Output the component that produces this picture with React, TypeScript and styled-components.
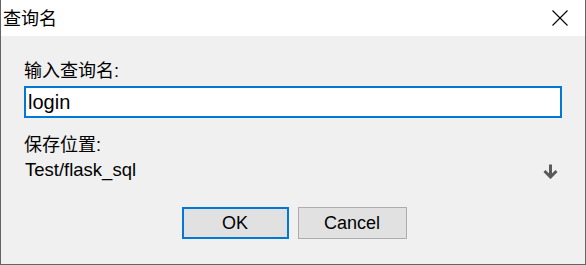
import React from "react";
import styled, { createGlobalStyle } from "styled-components";

const Global = createGlobalStyle`
  html, body { margin: 0; padding: 0; background: #f0f0f0; }
  * { box-sizing: border-box; }
`;

const Window = styled.div`
  width: 586px;
  height: 265px;
  background: #f0f0f0;
  border: 1px solid #646464;
  border-top: none;
  display: flex;
  flex-direction: column;
  font-family: "Liberation Sans", "Noto Sans CJK SC", sans-serif;
  color: #000;
`;

const TitleBar = styled.div`
  height: 36px;
  background: #fff;
  display: flex;
  align-items: center;
  justify-content: space-between;
  padding: 0 17px 0 2px;
`;

const Title = styled.span`
  font-family: "Noto Sans CJK SC", sans-serif;
  font-size: 18px;
  line-height: 36px;
  margin-top: -2px;
`;

const CloseIcon = styled.svg`
  width: 16px;
  height: 16px;
  display: block;
  margin-top: -1px;
`;

const Body = styled.div`
  display: flex;
  flex-direction: column;
  padding: 24px 23px 0 23px;
`;

const Label = styled.div<{ $top?: number }>`
  height: 22px;
  line-height: 22px;
  font-size: 18px;
  margin-top: ${(p) => p.$top ?? 0}px;
  white-space: nowrap;
`;

const Input = styled.input`
  margin-top: 4px;
  height: 32px;
  width: 100%;
  border: 2px solid #0078d7;
  background: #fff;
  padding: 0 0 0 2px;
  font-family: "Liberation Sans", sans-serif;
  font-size: 20px;
  color: #000;
  outline: none;
`;

const PathRow = styled.div`
  margin-top: 3px;
  height: 22px;
  line-height: 22px;
  font-size: 18.5px;
  display: flex;
  align-items: center;
  justify-content: space-between;
  padding-right: 4px;
  padding-left: 1px;
`;

const ArrowIcon = styled.svg`
  width: 15px;
  height: 15px;
  display: block;
  margin-top: 2px;
`;

const Buttons = styled.div`
  margin-top: 26px;
  display: flex;
  justify-content: center;
  gap: 9px;
  padding-left: 2px;
`;

const Button = styled.button<{ $default?: boolean }>`
  width: ${(p) => (p.$default ? 107 : 109)}px;
  height: 32px;
  background: #e1e1e1;
  border: ${(p) => (p.$default ? "2px solid #0078d7" : "1px solid #adadad")};
  font-family: "Liberation Sans", sans-serif;
  font-size: 18px;
  color: #000;
  padding: 0;
`;

export default function App() {
  return (
    <>
      <Global />
      <Window>
        <TitleBar>
          <Title>查询名</Title>
          <CloseIcon viewBox="0 0 16 16">
            <path d="M0.5 0.5 L15.5 15.5 M15.5 0.5 L0.5 15.5" stroke="#000" strokeWidth="1.1" fill="none" />
          </CloseIcon>
        </TitleBar>
        <Body>
          <Label>输入查询名:</Label>
          <Input defaultValue="login" />
          <Label $top={16}>保存位置:</Label>
          <PathRow>
            <span>Test/flask_sql</span>
            <ArrowIcon viewBox="0 0 15 15">
              <path d="M7.5 0.5 V12.5" stroke="#5a5a5a" strokeWidth="3" fill="none" />
              <path d="M1.5 7 L7.5 13 L13.5 7" stroke="#5a5a5a" strokeWidth="3" fill="none" strokeLinejoin="miter" />
            </ArrowIcon>
          </PathRow>
          <Buttons>
            <Button $default>OK</Button>
            <Button>Cancel</Button>
          </Buttons>
        </Body>
      </Window>
    </>
  );
}
